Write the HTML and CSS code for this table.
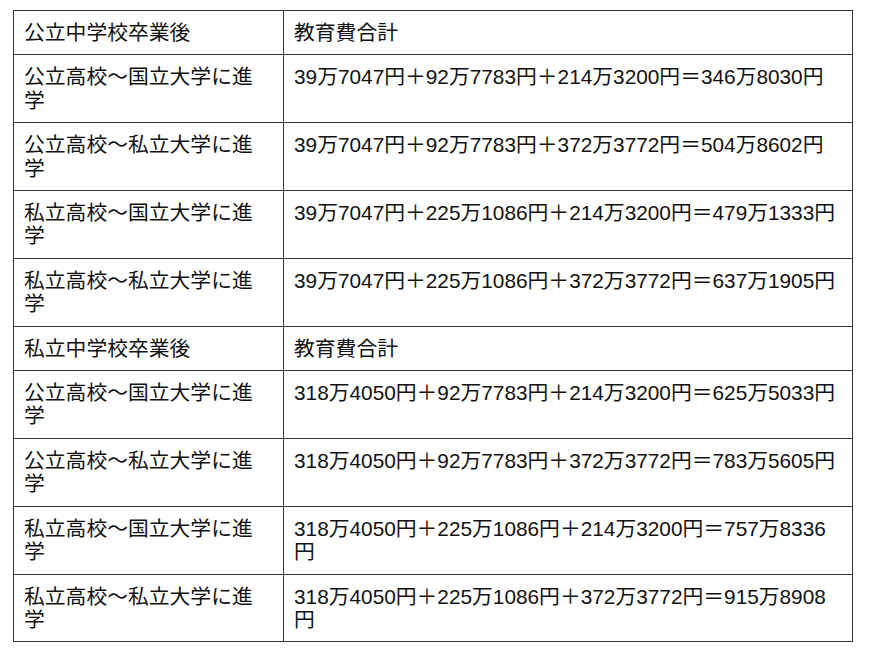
FILE: index.html
```html
<!DOCTYPE html>
<html lang="ja">
<head>
<meta charset="utf-8">
<title>教育費合計</title>
<link rel="stylesheet" href="styles.css">
</head>
<body>
<table class="cost-table">
  <colgroup>
    <col class="col-label">
    <col class="col-value">
  </colgroup>
  <tbody>
    <tr class="head-row"><td>公立中学校卒業後</td><td>教育費合計</td></tr>
    <tr><td>公立高校〜国立大学に進学</td><td>39万7047円＋92万7783円＋214万3200円＝346万8030円</td></tr>
    <tr><td>公立高校〜私立大学に進学</td><td>39万7047円＋92万7783円＋372万3772円＝504万8602円</td></tr>
    <tr><td>私立高校〜国立大学に進学</td><td>39万7047円＋225万1086円＋214万3200円＝479万1333円</td></tr>
    <tr><td>私立高校〜私立大学に進学</td><td>39万7047円＋225万1086円＋372万3772円＝637万1905円</td></tr>
    <tr class="head-row"><td>私立中学校卒業後</td><td>教育費合計</td></tr>
    <tr><td>公立高校〜国立大学に進学</td><td>318万4050円＋92万7783円＋214万3200円＝625万5033円</td></tr>
    <tr><td>公立高校〜私立大学に進学</td><td>318万4050円＋92万7783円＋372万3772円＝783万5605円</td></tr>
    <tr><td>私立高校〜国立大学に進学</td><td>318万4050円＋225万1086円＋214万3200円＝757万8336円</td></tr>
    <tr><td>私立高校〜私立大学に進学</td><td>318万4050円＋225万1086円＋372万3772円＝915万8908円</td></tr>
  </tbody>
</table>
</body>
</html>
```
FILE: styles.css
```css
html, body {
  margin: 0;
  padding: 0;
  background: #ffffff;
}

body {
  font-family: "Liberation Sans", Arial, "Noto Sans CJK JP", sans-serif;
  color: #111111;
}

.cost-table {
  margin: 10px 0 0 13px;
  width: 840px;
  border-collapse: collapse;
  table-layout: fixed;
  font-size: 20.8px;
  line-height: 23.4px;
}

.col-label {
  width: 270px;
}

.cost-table td {
  border: 1px solid #333333;
  padding: 10px;
  vertical-align: top;
  text-align: left;
}
```
